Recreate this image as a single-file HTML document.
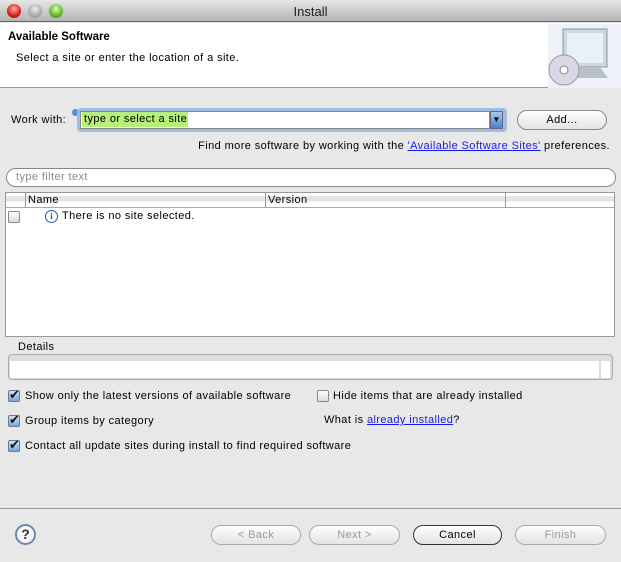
<!DOCTYPE html>
<html><head><meta charset="utf-8"><style>
*{margin:0;padding:0;box-sizing:border-box}
body{width:621px;height:562px;background:#e8e8e8;font-family:"Liberation Sans",sans-serif;font-size:11px;letter-spacing:0.4px;color:#000;position:relative;overflow:hidden}
.a{position:absolute;white-space:nowrap}
.btn{position:absolute;height:20px;border:1px solid #888;border-radius:10px;background:linear-gradient(#fff,#f0f0f0 50%,#e4e4e4);text-align:center;line-height:18px;font-size:11px}
.dis{color:#999;border-color:#aaa}
.cb{position:absolute;width:12px;height:12px;border:1px solid #6a7a90;border-radius:2px;background:linear-gradient(#cfe0f5,#7aa6d8)}
.cb:after{content:"✔";position:absolute;left:0px;top:-4px;font-size:13px;color:#111}
.cbu{position:absolute;width:12px;height:12px;border:1px solid #888;border-radius:2px;background:linear-gradient(#fff,#ddd)}
a{color:#1a1aee;text-decoration:underline}
</style></head><body>
<div class="a" style="left:0;top:0;width:621px;height:22px;background:linear-gradient(#e6e6e6,#b4b4b4);border-bottom:1px solid #666"></div>
<div class="a" style="left:7px;top:4px;width:14px;height:14px;border-radius:50%;background:radial-gradient(circle at 50% 35%,#ffb0a0,#d0201a 60%,#8a1010);"></div>
<div class="a" style="left:28px;top:4px;width:14px;height:14px;border-radius:50%;background:radial-gradient(circle at 50% 35%,#eee,#aaa 60%,#888);"></div>
<div class="a" style="left:49px;top:4px;width:14px;height:14px;border-radius:50%;background:radial-gradient(circle at 50% 35%,#d8ffb0,#5cb82a 60%,#2f7a10);"></div>
<div class="a" style="left:0;top:4px;width:621px;text-align:center;font-size:13px;color:#222;letter-spacing:0">Install</div>
<div class="a" style="left:0;top:23px;width:621px;height:65px;background:#fff;border-bottom:1px solid #999"></div>
<div class="a" style="left:8px;top:31px;font-weight:bold;font-size:11.5px;letter-spacing:0">Available Software</div>
<div class="a" style="left:16px;top:52px">Select a site or enter the location of a site.</div>
<svg class="a" style="left:548px;top:24px" width="73" height="64">
<rect x="0" y="0" width="73" height="64" fill="#eef2f8"/>
<rect x="15" y="5" width="44" height="38" fill="#cfd6e0" stroke="#8a94a4"/>
<rect x="19" y="9" width="36" height="30" fill="#e8f0fa"/>
<path d="M30 43 L26 54 L60 54 L52 43Z" fill="#b8c0cc"/>
<circle cx="16" cy="46" r="15" fill="#d8d8e8" stroke="#999"/>
<circle cx="16" cy="46" r="4" fill="#fff" stroke="#888"/>
</svg>
<div class="a" style="left:11px;top:114px">Work with:</div>
<div class="a" style="left:72px;top:109px;width:7px;height:7px;border-radius:50%;background:#5b8fd0"></div>
<div class="a" style="left:77px;top:108px;width:430px;height:24px;border-radius:4px;background:#9cbde6"></div>
<div class="a" style="left:80px;top:111px;width:410px;height:18px;background:#fff;border:1px solid #888"></div>
<div class="a" style="left:82px;top:112px;width:106px;height:15px;background:#b6f07a"></div>
<div class="a" style="left:84px;top:113px">type or select a site</div>
<div class="a" style="left:490px;top:111px;width:13px;height:18px;background:linear-gradient(#a8c8f0,#4a82cc);border:1px solid #667;font-size:8px;text-align:center;line-height:16px">▼</div>
<div class="btn" style="left:517px;top:110px;width:90px">Add...</div>
<div class="a" style="right:11px;top:140px">Find more software by working with the <a>'Available Software Sites'</a> preferences.</div>
<div class="a" style="left:6px;top:168px;width:610px;height:19px;border:1px solid #888;border-radius:10px;background:#fff"></div>
<div class="a" style="left:16px;top:171px;color:#888">type filter text</div>
<div class="a" style="left:5px;top:192px;width:610px;height:145px;border:1px solid #999;background:#fff"></div>
<div class="a" style="left:6px;top:193px;width:608px;height:15px;background:linear-gradient(#fff 20%,#e4e4e4 20%,#e4e4e4 60%,#fff 60%);border-bottom:1px solid #aaa"></div>
<div class="a" style="left:25px;top:193px;width:1px;height:15px;background:#999"></div>
<div class="a" style="left:265px;top:193px;width:1px;height:15px;background:#999"></div>
<div class="a" style="left:505px;top:193px;width:1px;height:15px;background:#999"></div>
<div class="a" style="left:28px;top:194px">Name</div>
<div class="a" style="left:268px;top:194px">Version</div>
<div class="cbu" style="left:8px;top:211px"></div>
<div class="a" style="left:45px;top:210px;width:13px;height:13px;border:1px solid #1a5fb0;border-radius:50%;color:#1a5fb0;font-size:9px;font-weight:bold;text-align:center;line-height:11px;font-family:'Liberation Serif',serif;letter-spacing:0">i</div>
<div class="a" style="left:62px;top:210px">There is no site selected.</div>
<div class="a" style="left:18px;top:341px">Details</div>
<div class="a" style="left:8px;top:354px;width:605px;height:26px;border:1px solid #aaa;border-radius:4px;background:#ddd"></div>
<div class="a" style="left:10px;top:361px;width:590px;height:17px;background:#fff"></div>
<div class="a" style="left:599px;top:361px;width:11px;height:17px;background:#fff;border-left:2px solid #ddd"></div>
<div class="cb" style="left:8px;top:390px"></div><div class="a" style="left:25px;top:390px">Show only the latest versions of available software</div>
<div class="cbu" style="left:317px;top:390px"></div><div class="a" style="left:333px;top:390px">Hide items that are already installed</div>
<div class="cb" style="left:8px;top:415px"></div><div class="a" style="left:25px;top:415px">Group items by category</div>
<div class="a" style="left:324px;top:414px">What is <a>already installed</a>?</div>
<div class="cb" style="left:8px;top:440px"></div><div class="a" style="left:25px;top:440px">Contact all update sites during install to find required software</div>
<div class="a" style="left:0;top:508px;width:621px;height:1px;background:#999"></div>
<div class="a" style="left:15px;top:524px;width:21px;height:21px;border:2px solid #6a88b0;border-radius:50%;background:#f4f4f4;text-align:center;font-weight:bold;font-size:14px;line-height:17px;color:#333;letter-spacing:0">?</div>
<div class="btn dis" style="left:211px;top:525px;width:90px">&lt; Back</div>
<div class="btn dis" style="left:309px;top:525px;width:91px">Next &gt;</div>
<div class="btn" style="left:413px;top:525px;width:89px;border-color:#333">Cancel</div>
<div class="btn dis" style="left:515px;top:525px;width:91px">Finish</div>
</body></html>
